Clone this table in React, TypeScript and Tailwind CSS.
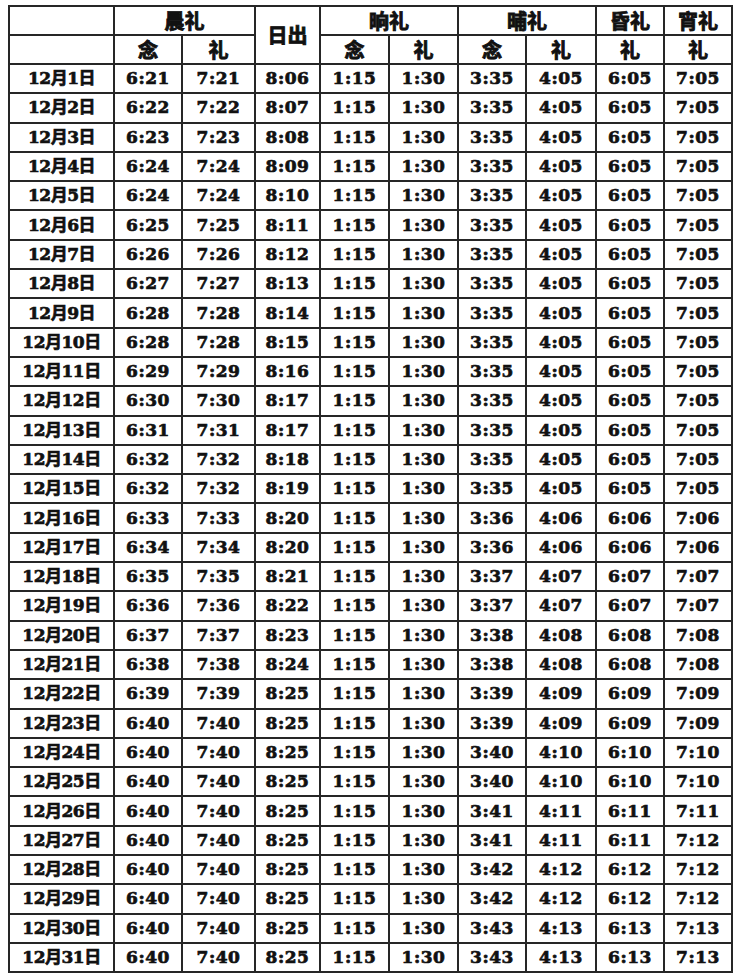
const fajr = ['6:21','6:22','6:23','6:24','6:24','6:25','6:26','6:27','6:28','6:28','6:29','6:30','6:31','6:32','6:32','6:33','6:34','6:35','6:36','6:37','6:38','6:39','6:40','6:40','6:40','6:40','6:40','6:40','6:40','6:40','6:40']
const sunrise = ['8:06','8:07','8:08','8:09','8:10','8:11','8:12','8:13','8:14','8:15','8:16','8:17','8:17','8:18','8:19','8:20','8:20','8:21','8:22','8:23','8:24','8:25','8:25','8:25','8:25','8:25','8:25','8:25','8:25','8:25','8:25']
const asrMin = [35,35,35,35,35,35,35,35,35,35,35,35,35,35,35,36,36,37,37,38,38,39,39,40,40,41,41,42,42,43,43]
const maghribMin = [5,5,5,5,5,5,5,5,5,5,5,5,5,5,5,6,6,7,7,8,8,9,9,10,10,11,11,12,12,13,13]
const ishaMin = [5,5,5,5,5,5,5,5,5,5,5,5,5,5,5,6,6,7,7,8,8,9,9,10,10,11,12,12,12,13,13]

const pad = (n: number) => String(n).padStart(2, '0')

const rows = fajr.map((f, i) => [
  `12月${i + 1}日`,
  f,
  '7:' + f.split(':')[1],
  sunrise[i],
  '1:15',
  '1:30',
  `3:${pad(asrMin[i])}`,
  `4:${pad(asrMin[i] - 30)}`,
  `6:${pad(maghribMin[i])}`,
  `7:${pad(ishaMin[i])}`,
])

const cell = 'border-2 border-[#262626] p-0 text-center align-middle'

export default function App() {
  return (
    <div className="min-h-[977px] w-[737px] bg-white pl-2 pt-[5px]">
      <table
        className="w-[723px] table-fixed border-collapse text-[17px] font-bold text-[#111] leading-none [-webkit-text-stroke:0.7px_#111]"
        style={{ fontFamily: '"DejaVu Serif", "Noto Sans CJK SC", serif' }}
      >
        <colgroup>
          <col className="w-[105px]" />
          <col className="w-[68px]" />
          <col className="w-[73px]" />
          <col className="w-[65px]" />
          <col className="w-[69px]" />
          <col className="w-[69px]" />
          <col className="w-[68px]" />
          <col className="w-[70px]" />
          <col className="w-[68px]" />
          <col className="w-[68px]" />
        </colgroup>
        <thead
          className="text-[20px] font-black [-webkit-text-stroke:0.9px_#111]"
          style={{ fontFamily: '"Noto Sans CJK SC", sans-serif' }}
        >
          <tr className="h-[29px]">
            <th className={cell}></th>
            <th className={cell} colSpan={2}>晨礼</th>
            <th className={cell} rowSpan={2}>日出</th>
            <th className={cell} colSpan={2}>晌礼</th>
            <th className={cell} colSpan={2}>晡礼</th>
            <th className={cell}>昏礼</th>
            <th className={cell}>宵礼</th>
          </tr>
          <tr className="h-[29px]">
            <th className={cell}></th>
            <th className={cell}>念</th>
            <th className={cell}>礼</th>
            <th className={cell}>念</th>
            <th className={cell}>礼</th>
            <th className={cell}>念</th>
            <th className={cell}>礼</th>
            <th className={cell}>礼</th>
            <th className={cell}>礼</th>
          </tr>
        </thead>
        <tbody>
          {rows.map((r) => (
            <tr key={r[0]} className="h-[29.3px]">
              {r.map((v, j) => (
                <td
                  key={j}
                  className={j === 0 ? `${cell} tracking-[-0.5px]` : `${cell} tracking-[0.5px]`}
                >
                  {v}
                </td>
              ))}
            </tr>
          ))}
        </tbody>
      </table>
    </div>
  )
}
